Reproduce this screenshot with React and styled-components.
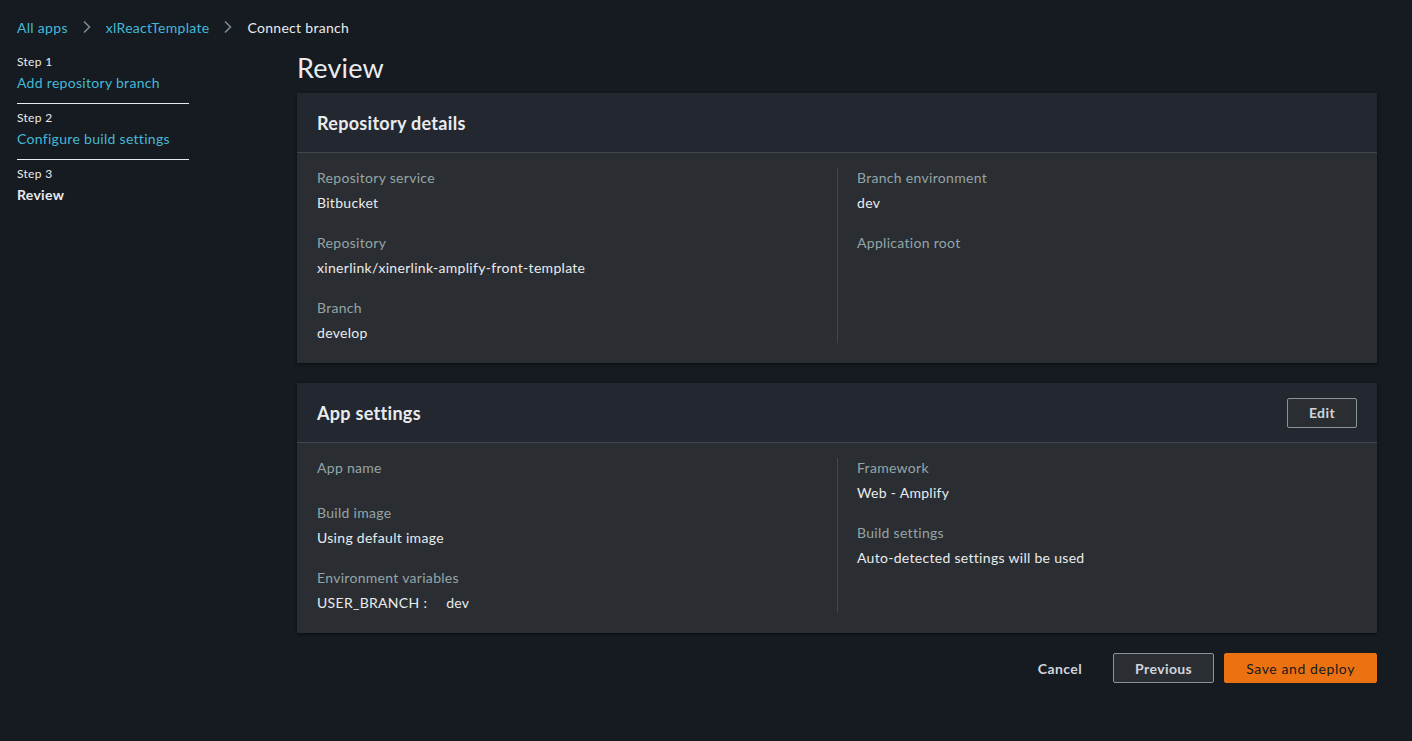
import React from 'react';
import styled, { createGlobalStyle } from 'styled-components';

const GlobalStyle = createGlobalStyle`
  html, body {
    margin: 0;
    padding: 0;
    background: #161a21;
    font-family: Lato, "Noto Sans", sans-serif;
    letter-spacing: 0.3px;
    color: #d1d5db;
  }
`;

const Page = styled.div`
  min-height: 741px;
  padding: 17px 35px 0 17px;
  box-sizing: border-box;
`;

const Breadcrumbs = styled.nav`
  display: flex;
  align-items: center;
  height: 20px;
  font-size: 14px;
  gap: 14px;
`;

const Crumb = styled.span`
  color: ${(p) => (p.$current ? '#e9ebed' : '#44b9d6')};
`;

const Chevron = () => (
  <svg width="10" height="14" viewBox="0 0 10 14">
    <path d="M2 1.5 L7.5 7 L2 12.5" fill="none" stroke="#7d8998" strokeWidth="1.6" />
  </svg>
);

const Layout = styled.div`
  display: grid;
  grid-template-columns: 172px 1fr;
  column-gap: 108px;
  margin-top: 8px;
`;

const Steps = styled.ol`
  list-style: none;
  margin: 0;
  padding: 0;
  padding-top: 9px;
`;

const Step = styled.li`
  padding: 0 0 ${(p) => (p.$last ? '0' : '9px')};
  margin-bottom: 6px;
  border-bottom: ${(p) => (p.$last ? 'none' : '1px solid #e9ebed')};
`;

const StepNum = styled.div`
  font-size: 12px;
  line-height: 16px;
  color: #e9ebed;
`;

const StepName = styled.div`
  font-size: 14px;
  line-height: 22px;
  margin-top: 2px;
  color: ${(p) => (p.$active ? '#e9ebed' : '#44b9d6')};
  font-weight: ${(p) => (p.$active ? 700 : 400)};
`;

const Main = styled.main`
  display: flex;
  flex-direction: column;
`;

const Title = styled.h1`
  margin: 6px 0 8px;
  font-size: 27px;
  line-height: 34px;
  font-weight: 400;
  letter-spacing: 0.2px;
  color: #e9ebed;
`;

const Card = styled.section`
  background: #2a2e33;
  box-shadow: 0 1px 3px rgba(0, 0, 0, 0.6);
  margin-bottom: 20px;
`;

const CardHeader = styled.header`
  display: flex;
  align-items: center;
  justify-content: space-between;
  height: 59px;
  padding: 0 20px;
  background: #232730;
  border-bottom: 1px solid #414750;
`;

const CardTitle = styled.h2`
  margin: 0;
  font-size: 18px;
  font-weight: 700;
  color: #e9ebed;
`;

const Columns = styled.div`
  display: grid;
  grid-template-columns: 1fr 1fr;
  padding: 15px 20px 20px;
`;

const Column = styled.div`
  display: flex;
  flex-direction: column;
  gap: 20px;
  ${(p) =>
    p.$right
      ? 'padding-left: 20px;'
      : 'border-right: 1px solid #414750; padding-right: 20px; margin-right: -1px;'}
`;

const Field = styled.div`
  display: flex;
  flex-direction: column;
  gap: 5px;
  font-size: 14px;
`;

const Label = styled.div`
  line-height: 20px;
  color: #95a5a6;
`;

const Value = styled.div`
  line-height: 20px;
  color: #e9ebed;
`;

const EnvPair = styled.span`
  display: inline-flex;
  gap: 19px;
`;

const Button = styled.button`
  height: 30px;
  padding: 0 21px;
  font-family: inherit;
  letter-spacing: 0.4px;
  font-size: 14px;
  font-weight: 700;
  color: #d1d5db;
  background: #2a2e33;
  border: 1px solid #879596;
  border-radius: 2px;
  cursor: pointer;
`;

const PrimaryButton = styled(Button)`
  background: #ec7211;
  border-color: #ec7211;
  color: #16191f;
  font-weight: 400;
  letter-spacing: 0.6px;
`;

const LinkButton = styled(Button)`
  background: transparent;
  border-color: transparent;
  padding: 0 20px;
`;

const Footer = styled.div`
  display: flex;
  justify-content: flex-end;
  gap: 10px;
`;

const FieldItem = ({ label, value }) => (
  <Field>
    <Label>{label}</Label>
    <Value>{value}</Value>
  </Field>
);

const App = () => (
  <>
    <GlobalStyle />
    <Page>
      <Breadcrumbs>
        <Crumb>All apps</Crumb>
        <Chevron />
        <Crumb>xlReactTemplate</Crumb>
        <Chevron />
        <Crumb $current>Connect branch</Crumb>
      </Breadcrumbs>
      <Layout>
        <Steps>
          <Step>
            <StepNum>Step 1</StepNum>
            <StepName>Add repository branch</StepName>
          </Step>
          <Step>
            <StepNum>Step 2</StepNum>
            <StepName>Configure build settings</StepName>
          </Step>
          <Step $last>
            <StepNum>Step 3</StepNum>
            <StepName $active>Review</StepName>
          </Step>
        </Steps>
        <Main>
          <Title>Review</Title>
          <Card>
            <CardHeader>
              <CardTitle>Repository details</CardTitle>
            </CardHeader>
            <Columns>
              <Column>
                <FieldItem label="Repository service" value="Bitbucket" />
                <FieldItem label="Repository" value="xinerlink/xinerlink-amplify-front-template" />
                <FieldItem label="Branch" value="develop" />
              </Column>
              <Column $right>
                <FieldItem label="Branch environment" value="dev" />
                <FieldItem label="Application root" value="" />
              </Column>
            </Columns>
          </Card>
          <Card>
            <CardHeader>
              <CardTitle>App settings</CardTitle>
              <Button>Edit</Button>
            </CardHeader>
            <Columns>
              <Column>
                <FieldItem label="App name" value="" />
                <FieldItem label="Build image" value="Using default image" />
                <FieldItem
                  label="Environment variables"
                  value={
                    <EnvPair>
                      <span>USER_BRANCH :</span>
                      <span>dev</span>
                    </EnvPair>
                  }
                />
              </Column>
              <Column $right>
                <FieldItem label="Framework" value="Web - Amplify" />
                <FieldItem label="Build settings" value="Auto-detected settings will be used" />
              </Column>
            </Columns>
          </Card>
          <Footer>
            <LinkButton>Cancel</LinkButton>
            <Button>Previous</Button>
            <PrimaryButton>Save and deploy</PrimaryButton>
          </Footer>
        </Main>
      </Layout>
    </Page>
  </>
);

export default App;
